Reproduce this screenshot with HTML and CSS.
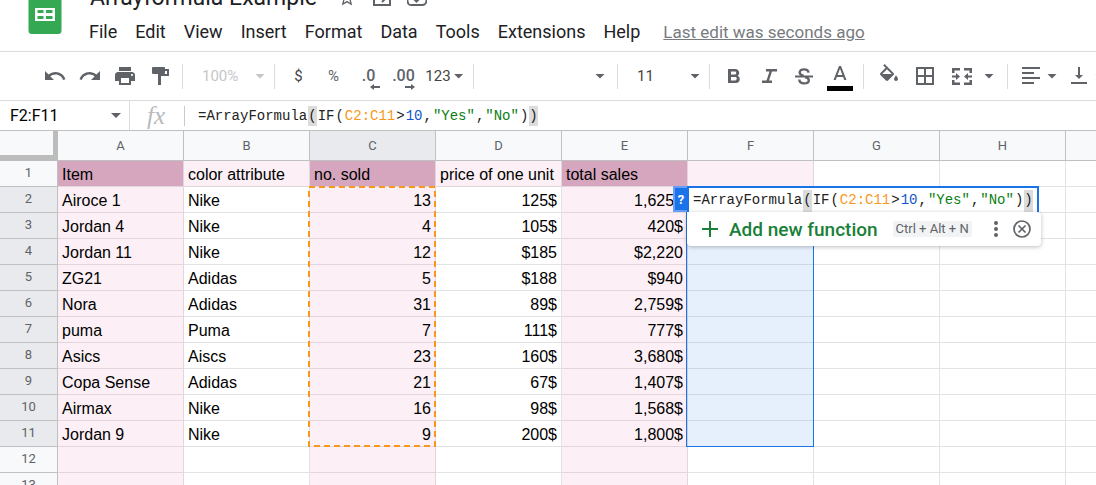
FILE: index.html
```html
<!DOCTYPE html>
<html lang="en">
<head>
<meta charset="utf-8">
<title>Arrayformula Example</title>
<link rel="stylesheet" href="styles.css">
</head>
<body>
<header class="masthead">
  <a class="logo" href="#" aria-label="Sheets home">
    <svg width="34" height="46" viewBox="0 0 34 46"><path fill="#34a853" d="M3.500 0H23l10.500 10.500V42.500a3.500 3.500 0 0 1-3.500 3.500H4a3.500 3.500 0 0 1-3.500-3.500V3.500A3.500 3.500 0 0 1 3.500 0z"/><path fill="#fff" fill-rule="evenodd" d="M7 20h20v13H7zM9.500 22v3h6v-3zM18 22v3h6.500v-3zM9.500 28v3h6v-3zM18 28v3h6.500v-3z"/></svg>
  </a>
  <div class="masthead-main">
    <div class="title-row">
      <h1 class="title">Arrayformula Example</h1>
      <button class="title-btn" aria-label="Star"><svg width="20" height="20" viewBox="0 0 24 24"><path fill="#5f6368" d="M22 9.240l-7.190-.620L12 2 9.190 8.630 2 9.240l5.460 4.730L5.820 21 12 17.270 18.180 21l-1.630-7.030L22 9.240zM12 15.400l-3.760 2.270 1-4.280-3.320-2.880 4.380-.380L12 6.100l1.710 4.040 4.380.380-3.320 2.880 1 4.280L12 15.400z"/></svg></button>
      <button class="title-btn" aria-label="Move"><svg width="20" height="20" viewBox="0 0 20 20" fill="none" stroke="#5f6368" stroke-width="2"><path d="M2 3h6l2 2h8v12H2zM6 11h7M10 8l3 3-3 3"/></svg></button>
      <button class="title-btn" aria-label="Saved to Drive"><svg width="20" height="20" viewBox="0 0 20 20" fill="none" stroke="#5f6368" stroke-width="2"><path d="M5 17a4 4 0 0 1-1-8 6 6 0 0 1 11-1 4.500 4.500 0 0 1 0 9zM7 11l2.500 2.500L13 10"/></svg></button>
    </div>
    <nav class="menu">
      <button>File</button><button>Edit</button><button>View</button><button>Insert</button><button>Format</button><button>Data</button><button>Tools</button><button>Extensions</button><button>Help</button>
      <a class="last-edit" href="#">Last edit was seconds ago</a>
    </nav>
  </div>
</header>

<div class="toolbar">
  <button class="tool" aria-label="Undo"><svg class="icon" viewBox="0 0 24 24"><path d="M12.500 8c-2.650 0-5.050.990-6.900 2.600L2 7v9h9l-3.620-3.620c1.390-1.160 3.160-1.880 5.120-1.880 3.540 0 6.550 2.310 7.600 5.500l2.370-.780C21.080 11.030 17.150 8 12.500 8z"/></svg></button>
  <button class="tool" aria-label="Redo"><svg class="icon" viewBox="0 0 24 24"><path d="M18.400 10.600C16.550 8.990 14.150 8 11.500 8c-4.650 0-8.580 3.030-9.960 7.220L3.900 16c1.050-3.190 4.050-5.500 7.600-5.500 1.950 0 3.730.720 5.120 1.880L13 16h9V7l-3.600 3.600z"/></svg></button>
  <button class="tool" aria-label="Print"><svg class="icon" viewBox="0 0 24 24"><path d="M19 8H5c-1.660 0-3 1.340-3 3v6h4v4h12v-4h4v-6c0-1.660-1.340-3-3-3zm-3 11H8v-5h8v5zm3-7c-.550 0-1-.450-1-1s.450-1 1-1 1 .450 1 1-.450 1-1 1zm-1-9H6v4h12V3z"/></svg></button>
  <button class="tool" aria-label="Paint format"><svg class="icon" viewBox="0 0 24 24"><path d="M5 3h11a1 1 0 0 1 1 1v1h4v7h-8v9h-3V10h9V7h-2v2a1 1 0 0 1-1 1H5a1 1 0 0 1-1-1V4a1 1 0 0 1 1-1z"/></svg></button>
  <span class="divider"></span>
  <label class="picker muted"><select aria-label="Zoom"><option>100%</option></select><span class="caret"></span></label>
  <span class="divider"></span>
  <button class="tool strong">$</button>
  <button class="tool">%</button>
  <button class="tool decimal" aria-label="Decrease decimal places"><span>.0</span><svg width="10" height="6" viewBox="0 0 10 6"><path d="M4 0v2h6v2H4v2L0 3z"/></svg></button>
  <button class="tool decimal" aria-label="Increase decimal places"><span>.00</span><svg width="10" height="6" viewBox="0 0 10 6"><path d="M6 0v2H0v2h6v2l4-3z"/></svg></button>
  <button class="tool formats strong">123<span class="caret"></span></button>
  <span class="divider"></span>
  <label class="picker family"><select aria-label="Font"><option></option></select><span class="caret"></span></label>
  <span class="divider"></span>
  <label class="picker size"><select aria-label="Font size"><option>11</option></select><span class="caret"></span></label>
  <span class="divider"></span>
  <button class="tool" aria-label="Bold"><svg class="icon" viewBox="0 0 24 24"><path d="M15.600 11.790c.970-.670 1.650-1.770 1.650-2.790 0-2.260-1.750-4-4-4H6v14h8.040c2.090 0 3.710-1.700 3.710-3.790 0-1.520-.860-2.820-2.150-3.420zM9 7.500h3.750c.830 0 1.500.670 1.500 1.500s-.670 1.500-1.500 1.500H9v-3zm4.250 9H9v-3.500h4.250c.830 0 1.500.670 1.500 1.500s-.670 2-1.500 2z"/></svg></button>
  <button class="tool" aria-label="Italic"><svg class="icon" viewBox="0 0 24 24"><path d="M9 5v2.500h3.500L9.500 16.500H5V19h10v-2.500h-3l3-9h5V5z"/></svg></button>
  <button class="tool" aria-label="Strikethrough"><svg class="icon" viewBox="0 0 24 24"><path d="M3 11.500h18v2H3z"/><path fill="none" stroke="#5f6368" stroke-width="2.400" d="M16.500 8.700C16.300 6.500 14.500 5.400 12 5.400c-2.700 0-4.300 1.300-4.300 3.100 0 1.700 1.300 2.700 4 3.300M13 13c2.400.600 3.800 1.500 3.800 3.200 0 1.900-1.800 3.200-4.600 3.200-3.100 0-4.800-1.600-4.900-3.900"/></svg></button>
  <button class="tool text-color" aria-label="Text color"><svg class="icon" viewBox="0 -3 24 24"><path d="M11 1L5.500 15h2.250l1.120-3h6.250l1.120 3h2.250L13 1h-2zm-1.380 9L12 3.670 14.380 10H9.620z"/></svg><span class="swatch"></span></button>
  <span class="divider"></span>
  <button class="tool wide" aria-label="Fill color"><svg class="icon" viewBox="0 0 24 24"><path d="M16.560 8.940L7.620 0 6.210 1.410l2.380 2.380-5.150 5.150a1.490 1.490 0 0 0 0 2.120l5.500 5.500c.290.290.680.440 1.060.440s.770-.150 1.060-.440l5.500-5.500c.590-.580.590-1.530 0-2.120zM5.210 10L10 5.210 14.790 10H5.210zM19 11.500s-2 2.170-2 3.500c0 1.100.900 2 2 2s2-.900 2-2c0-1.330-2-3.500-2-3.500z"/></svg></button>
  <button class="tool" aria-label="Borders"><svg class="icon" viewBox="0 0 24 24"><path fill-rule="evenodd" d="M3 3v18h18V3H3zm8 16H5v-6h6v6zm0-8H5V5h6v6zm8 8h-6v-6h6v6zm0-8h-6V5h6v6z"/></svg></button>
  <button class="tool merge" aria-label="Merge cells"><svg class="icon" viewBox="0 0 24 24"><path d="M2 4h8v2.500H4.500V9H2zM14 4h8v5h-2.500V6.500H14zM2 16h2.500v2.500H10V21H2zM19.500 16H22v5h-8v-2.500h5.500zM2 11.500h4V9l4 3.500L6 16v-2.500H2zM22 11.500h-4V9l-4 3.500 4 3.500v-2.500h4z"/></svg><span class="caret"></span></button>
  <span class="divider"></span>
  <button class="tool align" aria-label="Horizontal align"><svg class="icon" viewBox="0 0 24 24"><path d="M3 3h18v2H3zM3 8h12v2H3zM3 13h18v2H3zM3 18h12v2H3z"/></svg><span class="caret"></span></button>
  <button class="tool align" aria-label="Vertical align"><svg class="icon" viewBox="0 0 24 24"><path d="M16 11h-3V3h-2v8H8l4 4 4-4zM4 18v2h16v-2H4z"/></svg><span class="caret"></span></button>
</div>

<div class="formula-bar">
  <label class="name-box"><input type="text" value="F2:F11" aria-label="Name box"><span class="caret"></span></label>
  <span class="fx">fx</span>
  <div class="formula" role="textbox" aria-label="Formula"><span>=ArrayFormula</span><span class="match">(</span><span>IF</span><span>(</span><span class="ref">C2:C11</span><span>&gt;</span><span class="num">10</span><span>,</span><span class="str">"Yes"</span><span>,</span><span class="str">"No"</span><span>)</span><span class="match">)</span></div>
</div>

<main class="sheet">
  <table class="grid">
    <colgroup><col class="col-index"><col><col><col><col><col><col><col><col><col></colgroup>
    <thead>
      <tr><th class="corner"></th><th>A</th><th>B</th><th class="on">C</th><th>D</th><th>E</th><th>F</th><th>G</th><th>H</th><th></th></tr>
    </thead>
    <tbody>
      <tr class="labels"><th>1</th><td>Item</td><td>color attribute</td><td>no. sold</td><td>price of one unit</td><td>total sales</td><td></td><td></td><td></td><td></td></tr>
      <tr class="on"><th>2</th><td>Airoce 1</td><td>Nike</td><td>13</td><td>125$</td><td>1,625$</td><td></td><td></td><td></td><td></td></tr>
      <tr class="on"><th>3</th><td>Jordan 4</td><td>Nike</td><td>4</td><td>105$</td><td>420$</td><td></td><td></td><td></td><td></td></tr>
      <tr class="on"><th>4</th><td>Jordan 11</td><td>Nike</td><td>12</td><td>$185</td><td>$2,220</td><td></td><td></td><td></td><td></td></tr>
      <tr class="on"><th>5</th><td>ZG21</td><td>Adidas</td><td>5</td><td>$188</td><td>$940</td><td></td><td></td><td></td><td></td></tr>
      <tr class="on"><th>6</th><td>Nora</td><td>Adidas</td><td>31</td><td>89$</td><td>2,759$</td><td></td><td></td><td></td><td></td></tr>
      <tr class="on"><th>7</th><td>puma</td><td>Puma</td><td>7</td><td>111$</td><td>777$</td><td></td><td></td><td></td><td></td></tr>
      <tr class="on"><th>8</th><td>Asics</td><td>Aiscs</td><td>23</td><td>160$</td><td>3,680$</td><td></td><td></td><td></td><td></td></tr>
      <tr class="on"><th>9</th><td>Copa Sense</td><td>Adidas</td><td>21</td><td>67$</td><td>1,407$</td><td></td><td></td><td></td><td></td></tr>
      <tr class="on"><th>10</th><td>Airmax</td><td>Nike</td><td>16</td><td>98$</td><td>1,568$</td><td></td><td></td><td></td><td></td></tr>
      <tr class="on"><th>11</th><td>Jordan 9</td><td>Nike</td><td>9</td><td>200$</td><td>1,800$</td><td></td><td></td><td></td><td></td></tr>
      <tr><th>12</th><td></td><td></td><td></td><td></td><td></td><td></td><td></td><td></td><td></td></tr>
      <tr><th>13</th><td></td><td></td><td></td><td></td><td></td><td></td><td></td><td></td><td></td></tr>
    </tbody>
  </table>
  <svg class="range" width="128" height="261" viewBox="0 0 128 261"><rect x="1" y="1" width="126" height="259" fill="none" stroke="#f7981d" stroke-width="2" stroke-dasharray="6 4"/></svg>
  <div class="selection"></div>
  <div class="editor">
    <button class="help" aria-label="Formula help">?</button>
    <div class="formula" role="textbox" aria-label="Cell formula"><span>=ArrayFormula</span><span class="match">(</span><span>IF</span><span>(</span><span class="ref">C2:C11</span><span>&gt;</span><span class="num">10</span><span>,</span><span class="str">"Yes"</span><span>,</span><span class="str">"No"</span><span>)</span><span class="match">)</span></div>
  </div>
  <div class="suggest">
    <button class="add"><svg width="16" height="16" viewBox="0 0 16 16"><path d="M7 0h2v7h7v2H9v7H7V9H0V7h7z"/></svg>Add new function</button>
    <kbd>Ctrl + Alt + N</kbd>
    <button class="more" aria-label="More"><svg width="4" height="18" viewBox="0 0 4 18"><circle cx="2" cy="3" r="2"/><circle cx="2" cy="9" r="2"/><circle cx="2" cy="15" r="2"/></svg></button>
    <button class="close" aria-label="Close"><svg width="18" height="18" viewBox="0 0 18 18" fill="none" stroke="#5f6368" stroke-width="1.700"><circle cx="9" cy="9" r="8"/><path d="M5.500 5.500l7 7M12.500 5.500l-7 7"/></svg></button>
  </div>
</main>
</body>
</html>
```

FILE: styles.css
```css
* { box-sizing: border-box; }

body {
  margin: 0;
  height: 100vh;
  display: flex;
  flex-direction: column;
  overflow: hidden;
  background: #fff;
  color: #202124;
  font-family: Roboto, "Liberation Sans", sans-serif;
}

button, input, select {
  margin: 0;
  padding: 0;
  border: 0;
  background: none;
  color: inherit;
  font: inherit;
}

select, input { appearance: none; outline: none; }

svg { display: block; }

.caret {
  flex: none;
  width: 10px;
  height: 5px;
  background: #5f6368;
  clip-path: polygon(0 0, 100% 0, 50% 100%);
}

/* Masthead */
.masthead {
  flex: none;
  display: flex;
  overflow: hidden;
  border-bottom: 1px solid #dadce0;
}

.logo {
  margin-top: -12px;
  padding-left: 28px;
}

.masthead-main {
  flex: 1;
  padding: 0 0 7px 27px;
}

.title-row {
  display: flex;
  align-items: center;
  height: 36px;
  margin-top: -20px;
  padding-left: 1px;
}

.title {
  margin: 0;
  margin-right: 20px;
  font-size: 23px;
  font-weight: 400;
  line-height: 36px;
}

.title-btn { margin-right: 15px; }

.menu {
  display: flex;
  gap: 18px;
  padding-top: 4px;
  font-size: 18px;
  line-height: 24px;
  white-space: nowrap;
}

.last-edit {
  margin-left: 5px;
  color: #777b80;
  font-size: 17px;
}

/* Toolbar */
.toolbar {
  flex: none;
  display: flex;
  align-items: center;
  height: 49px;
  padding-left: 37px;
  border-bottom: 1px solid #dadce0;
  overflow: hidden;
  color: #5f6368;
  font-size: 15px;
}

.tool {
  flex: none;
  display: flex;
  align-items: center;
  justify-content: center;
  width: 35px;
  height: 32px;
}

.tool svg { flex: none; fill: #5f6368; }
.icon { width: 24px; height: 24px; }
.strong { color: #444; }

.divider {
  flex: none;
  width: 1px;
  height: 25px;
  margin: 0 6px 0 5px;
  background: #dadce0;
}

.picker {
  flex: none;
  display: grid;
  align-items: center;
  width: 80px;
  color: #444;
}

.picker > * { grid-area: 1 / 1; }
.picker .caret { justify-self: end; margin-right: 4px; }
.picker select { width: 100%; height: 32px; padding-left: 13px; }
.muted { color: #c4c6c8; }
.muted select { opacity: 1; }
.muted .caret { background: #c4c6c8; }
.family { width: 132px; }
.family .caret { margin-right: 7px; }

.decimal {
  flex-direction: column;
  align-items: center;
  padding-top: 6px;
  font-size: 16px;
  font-weight: 500;
  line-height: 16px;
}

.decimal svg { align-self: flex-end; margin-right: 6px; }
.formats { width: 47px; gap: 3px; }
.text-color { flex-direction: column; width: 37px; }
.swatch { flex: none; width: 26px; height: 5px; background: #000; }
.wide { width: 37px; }
.merge { width: 60px; gap: 10px; }
.align { width: 48px; gap: 4px; }

/* Formula bar */
.formula-bar {
  flex: none;
  display: flex;
  align-items: center;
  height: 30px;
  border-bottom: 1px solid #c0c0c0;
}

.name-box {
  display: flex;
  align-items: center;
  align-self: stretch;
  width: 130px;
  padding: 0 8px 0 10px;
  border-right: 1px solid #dadce0;
  color: #000;
  font-size: 16px;
}

.name-box input { flex: 1; min-width: 0; }

.fx {
  width: 55px;
  padding-left: 17px;
  border-right: 1px solid #c8cacc;
  color: #b8babc;
  font: italic 25px/20px "Liberation Serif", serif;
}

.formula-bar .formula { padding-left: 13px; }

.formula {
  display: flex;
  gap: 1px;
  color: #222;
  font: 14px/20px "Liberation Mono", monospace;
  white-space: pre;
}

.match { background: #dcdcdc; }
.ref { color: #f7981d; }
.num { color: #1155cc; }
.str { color: #0b8014; }

/* Sheet */
.sheet {
  position: relative;
  flex: 1;
  min-height: 0;
  overflow: hidden;
}

.grid {
  width: 1192px;
  table-layout: fixed;
  border-collapse: separate;
  border-spacing: 0;
}

.grid .col-index { width: 58px; }

.grid th {
  height: 26px;
  padding: 0 0 2px;
  border: solid #c0c0c0;
  border-width: 0 1px 1px 0;
  background: #f8f9fa;
  color: #5f6368;
  font-size: 13px;
  font-weight: 400;
  line-height: 20px;
}

.grid thead th { height: 30px; padding: 0; }
.grid .on th, .grid th.on { background: #e8eaed; }
.grid thead .corner { border-width: 0 5px 6px 0; border-color: #bcbcbc; }

.grid td {
  height: 26px;
  padding: 2px 4px 0;
  border: solid #e2e3e3;
  border-width: 0 1px 1px 0;
  color: #000;
  font: 16px/20px "Liberation Sans", Arial, sans-serif;
  white-space: nowrap;
}

.grid td:nth-child(2), .grid td:nth-child(4), .grid td:nth-child(6) {
  background: #fcf0f6;
  border-color: #e0d6dc;
}

.grid .on td:nth-child(n+4) { text-align: right; }

.labels td:nth-child(-n+7) { background: #fcf0f6; border-color: #e0d6dc; }

.grid .labels td:nth-child(2), .grid .labels td:nth-child(4), .grid .labels td:nth-child(6) {
  background: #d5a6bd;
}

.range { position: absolute; left: 308px; top: 55px; }

.selection {
  position: absolute;
  left: 686px;
  top: 55px;
  width: 128px;
  height: 261px;
  border: 1px solid #1a73e8;
  background: rgba(26, 115, 232, 0.11);
}

.editor {
  position: absolute;
  left: 673px;
  top: 55px;
  display: flex;
}

.help {
  width: 14px;
  height: 26px;
  border: solid #669df6;
  border-width: 2px 0 2px 2px;
  background: #1a73e8;
  color: #fff;
  font-size: 13px;
  font-weight: 700;
}

.editor .formula {
  height: 28px;
  padding: 2px 4px 0;
  border: 2px solid #1a73e8;
  background: #fff;
}

.suggest {
  position: absolute;
  left: 687px;
  top: 81px;
  display: flex;
  align-items: center;
  height: 34px;
  padding: 0 10px 0 15px;
  border-radius: 0 4px 4px 4px;
  background: #fff;
  box-shadow: 0 1px 4px rgba(60, 64, 67, 0.35);
  color: #5f6368;
  fill: #5f6368;
}

.add {
  display: flex;
  align-items: center;
  gap: 11px;
  color: #188038;
  fill: #188038;
  font-size: 19px;
  font-weight: 500;
  white-space: nowrap;
}

.suggest kbd {
  margin: 0 22px 0 15px;
  padding: 0 3px;
  border-radius: 2px;
  background: #f1f3f4;
  font: 13px/16px Roboto, sans-serif;
  white-space: nowrap;
}

.more { margin-right: 15px; }
```
